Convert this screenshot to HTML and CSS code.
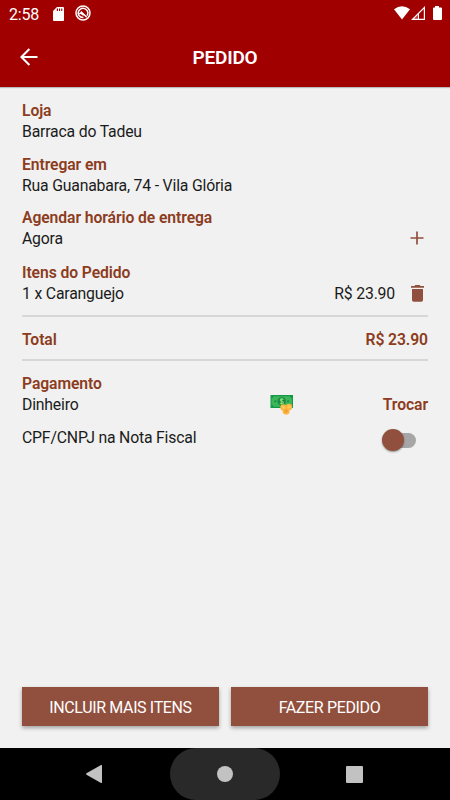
FILE: index.html
```html
<!DOCTYPE html>
<html lang="pt-BR">
<head>
<meta charset="utf-8">
<title>Pedido</title>
<link rel="stylesheet" href="styles.css">
</head>
<body>
<div class="screen">
  <header class="top">
    <div class="status">
      <span class="clock">2:58</span>
      <svg class="sd" width="11" height="14" viewBox="0 0 11 14"><path fill="#fff" fill-rule="evenodd" d="M4 0H10Q11 0 11 1V13Q11 14 10 14H1Q0 14 0 13V4ZM3.8 1.5V4H5V1.5ZM6 1.5V4H7.1V1.5ZM8.2 1.5V4H9.3V1.5Z"/></svg>
      <svg class="ring" width="16" height="16" viewBox="0 0 16 16" fill="none" stroke="#fff"><circle cx="8" cy="8" r="7" stroke-width="1.5"/><path stroke-width="1.5" d="M12 10.6A4.7 4.7 0 1 0 4 10.5Q5.6 12.8 8.4 12.6M5.8 6.6L11.8 12.2M4.2 8.6Q6 7.2 8.6 10.4"/></svg>
      <svg class="signal" width="48" height="15" viewBox="0 0 48 15"><path fill="#fff" d="M0 3.2Q8 -2.9 16 3.2L8 13.4Z"/><path fill="#fff" fill-rule="evenodd" d="M31 0V14H17ZM29.8 3L25 7.8V12.8H29.8Z"/><path fill="#a00000" fill-opacity=".75" d="M24 8.8V12.8H20Z"/><path fill="#fff" d="M41 0H45V1.4H47Q48 1.4 48 2.4V13Q48 14 47 14H40Q39 14 39 13V2.4Q39 1.4 40 1.4H41Z"/></svg>
    </div>
    <div class="bar">
      <svg class="back" width="18" height="18" viewBox="0 0 18 18" fill="none" stroke="#fff" stroke-width="2"><path d="M17.5 9H1.8M9.4 1L1.4 9L9.4 17"/></svg>
      <h1>PEDIDO</h1>
    </div>
  </header>
  <main>
    <section class="block">
      <h2>Loja</h2>
      <p>Barraca do Tadeu</p>
    </section>
    <section class="block">
      <h2>Entregar em</h2>
      <p>Rua Guanabara, 74 - Vila Glória</p>
    </section>
    <section class="block schedule">
      <h2>Agendar horário de entrega</h2>
      <div class="row"><p>Agora</p>
        <svg class="plus" width="14" height="14" viewBox="0 0 14 14" stroke="#91503e" stroke-width="1.7"><path d="M7 .5V13.5M.5 7H13.5"/></svg>
      </div>
    </section>
    <section class="items">
      <h2>Itens do Pedido</h2>
      <div class="row"><p>1 x Caranguejo</p><p class="price">R$ 23.90</p>
        <svg class="trash" width="13" height="17" viewBox="0 0 13 17" fill="#91503e"><path d="M0 1H3.4L4.3 0H8.7L9.6 1H13V2.7H0ZM1 4H12V15Q12 16.7 10.3 16.7H2.7Q1 16.7 1 15Z"/></svg>
      </div>
    </section>
    <div class="row total"><h2>Total</h2><h2>R$ 23.90</h2></div>
    <section class="payment">
      <h2>Pagamento</h2>
      <div class="row"><p class="method">Dinheiro</p>
        <svg class="money" width="24" height="22" viewBox="0 0 24 22"><path fill="#15974a" d="M.5 2H23V15H.5Z"/><path fill="#3db65a" d="M3.5 3.2H20Q20.3 5 22 5.2V11.8Q20.3 12 20 13.8H3.5Q3.2 12 1.5 11.8V5.2Q3.2 5 3.5 3.2Z"/><circle cx="11.7" cy="8.3" r="4.1" fill="#15884a"/><path fill="none" stroke="#8bd86b" stroke-width="1.1" d="M13.4 6.8Q12.9 5.9 11.7 5.9Q10.2 5.9 10.2 7Q10.2 8 11.7 8.3Q13.4 8.6 13.4 9.7Q13.4 10.8 11.7 10.8Q10.3 10.8 9.9 9.8M11.7 4.9V11.7"/><path stroke="#15884a" d="M4.3 8.3H6.3M5.3 7.3V9.3M17.1 8.3H19.1M18.1 7.3V9.3"/><circle cx="13.4" cy="14.4" r="3.1" fill="#f9b53c"/><circle cx="19" cy="14" r="3.2" fill="#f9b53c"/><circle cx="16.1" cy="18.2" r="3.4" fill="#ffb638"/><circle cx="19" cy="14" r="1.7" fill="#ffc85f"/><circle cx="13.4" cy="14.4" r="1.6" fill="#ffc85f"/><circle cx="16.1" cy="18" r="1.8" fill="#f29d37"/></svg>
        <h2 class="change">Trocar</h2>
      </div>
    </section>
    <div class="row invoice"><p>CPF/CNPJ na Nota Fiscal</p><span class="toggle"><i></i></span></div>
    <div class="actions"><button>INCLUIR MAIS ITENS</button><button>FAZER PEDIDO</button></div>
  </main>
  <nav>
    <svg class="nav-back" width="16" height="18" viewBox="0 0 16 18"><path fill="#c2c2c2" d="M15 0Q16 -.3 16 1V17Q16 18.3 15 18L.5 9.7Q-.3 9 .5 8.3Z"/></svg>
    <span class="home"><i></i></span>
    <span class="recent"></span>
  </nav>
</div>
</body>
</html>
```
FILE: styles.css
```css
* { box-sizing: border-box; margin: 0; padding: 0; }
body { font-family: Roboto, "Liberation Sans", sans-serif; font-size: 15.8px; letter-spacing: -.19px; line-height: 21px; color: #1b1b1b; }
svg { display: block; flex: none; }
.screen { width: 450px; height: 800px; background: #f1f1f1; display: flex; flex-direction: column; overflow: hidden; }
.top { height: 87px; background: #a00000; color: #fff; box-shadow: 0 1px 1px #b9bcbc; flex: none; }
.status { height: 28px; padding: 0 8px 0 9px; display: flex; align-items: center; }
.clock { width: 44px; font-size: 16px; }
.sd { margin-top: -1px; }
.ring { margin: -2px 0 0 11px; }
.signal { margin-left: auto; margin-top: -1px; }
.bar { height: 59px; padding-left: 20px; display: flex; align-items: center; }
.back { margin-top: -1px; }
h1 { font-size: 19px; line-height: 24px; font-weight: 600; width: 374px; text-align: center; letter-spacing: -.2px; }
h2 { font-size: 15.7px; line-height: 21px; font-weight: 600; letter-spacing: -.08px; color: #8c3c20; }
main { flex: 1; padding: 13px 22px 22px; display: flex; flex-direction: column; }
.block { margin-bottom: 11.5px; }
.row { display: flex; align-items: center; justify-content: space-between; }
.plus { margin: -1px 4px 0 0; }
.schedule { margin-bottom: 13px; }
.items { padding-bottom: 11px; }
.price { margin-left: auto; margin-right: 16px; }
.trash { margin-right: 4px; }
.total { height: 46px; padding-top: 2px; border-top: 2px solid #d7d7d7; border-bottom: 2px solid #d7d7d7; }
.payment { padding-top: 12px; }
.method { width: 248px; }
.money { margin-top: -2px; }
.change { margin-left: auto; }
.invoice { height: 22px; margin-top: 11px; }
.toggle { display: flex; align-items: center; width: 30px; height: 15px; border-radius: 8px; background: #a6a6a6; margin: 6px 12px 0 0; }
.toggle i { width: 22px; height: 22px; flex: none; margin-left: -4px; border-radius: 50%; background: #91503e; box-shadow: 0 1px 2px #0006; }
.actions { display: flex; gap: 12px; margin-top: auto; }
button { flex: 1; height: 39px; padding-top: 2px; border: 0; background: #91503e; color: #fff; font: 16px/20px Roboto, "Liberation Sans", sans-serif; letter-spacing: -.36px; box-shadow: 0 2px 4px #0005; }
nav { height: 52px; flex: none; background: #000; display: flex; align-items: center; }
.nav-back { margin-left: 86px; }
.home { width: 110px; height: 52px; margin-left: 68px; border-radius: 26px; background: #292929; display: flex; align-items: center; justify-content: center; }
.home i { width: 16px; height: 16px; border-radius: 50%; background: #c2c2c2; }
.recent { width: 17px; height: 17px; margin-left: 66px; border-radius: 1px; background: #c2c2c2; }
```
